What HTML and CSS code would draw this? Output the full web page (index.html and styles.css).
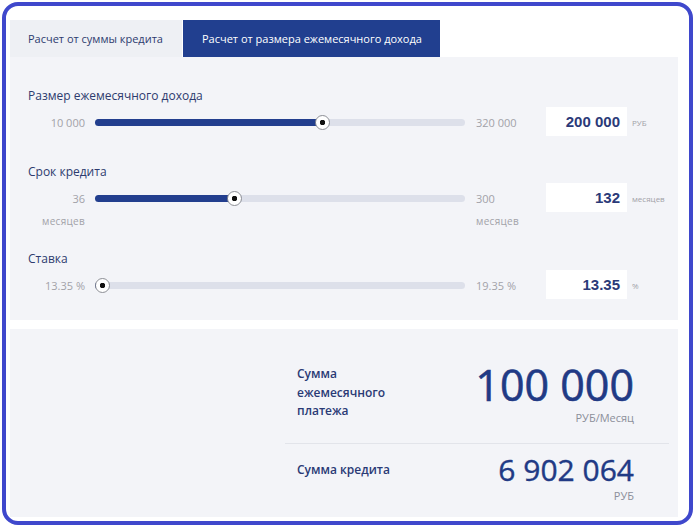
FILE: index.html
```html
<!DOCTYPE html>
<html lang="ru">
<head>
    <meta charset="UTF-8">
    <meta name="viewport" content="width=device-width, initial-scale=1.0">
    <title>Кредитный калькулятор</title>
    <link rel="stylesheet" href="styles.css">
</head>
<body>
    <div class="frame">
        <div class="tabs">
            <div class="tab">Расчет от суммы кредита</div>
            <div class="tab tab-active">Расчет от размера ежемесячного дохода</div>
        </div>

        <div class="params">
            <div class="param">
                <div class="param-title">Размер ежемесячного дохода</div>
                <div class="control">
                    <div class="min">10 000</div>
                    <div class="track">
                        <div class="fill" style="width: 61.6%"></div>
                        <div class="thumb" style="left: 61.6%"></div>
                    </div>
                    <div class="max">320 000</div>
                    <div class="value">200 000</div>
                    <div class="unit">РУБ</div>
                </div>
            </div>

            <div class="param param-tall">
                <div class="param-title">Срок кредита</div>
                <div class="control">
                    <div class="min">36<div class="sub">месяцев</div></div>
                    <div class="track">
                        <div class="fill" style="width: 37.6%"></div>
                        <div class="thumb" style="left: 37.6%"></div>
                    </div>
                    <div class="max">300<div class="sub">месяцев</div></div>
                    <div class="value">132</div>
                    <div class="unit">месяцев</div>
                </div>
            </div>

            <div class="param">
                <div class="param-title">Ставка</div>
                <div class="control">
                    <div class="min">13.35 %</div>
                    <div class="track">
                        <div class="fill" style="width: 1.9%"></div>
                        <div class="thumb" style="left: 1.9%"></div>
                    </div>
                    <div class="max">19.35 %</div>
                    <div class="value">13.35</div>
                    <div class="unit">%</div>
                </div>
            </div>
        </div>

        <div class="results">
            <div class="result-list">
                <div class="result">
                    <div class="result-name">Сумма<br>ежемесячного<br>платежа</div>
                    <div class="result-sum">
                        <div class="sum-big">100 000</div>
                        <div class="sum-unit">РУБ/Месяц</div>
                    </div>
                </div>
                <div class="result result-last">
                    <div class="result-name">Сумма кредита</div>
                    <div class="result-sum">
                        <div class="sum-mid">6 902 064</div>
                        <div class="sum-unit">РУБ</div>
                    </div>
                </div>
            </div>
        </div>
    </div>
</body>
</html>
```

FILE: styles.css
```css
body {
    margin: 0;
    font-family: 'Open Sans', 'Noto Sans', sans-serif;
    background-color: #fff;
}

.frame {
    margin: 2px;
    width: 668px;
    height: 497px;
    border: 4px solid #3f48cc;
    border-radius: 16px;
    padding: 14px 11px 4px 4px;
    display: flex;
    flex-direction: column;
}

/* вкладки */
.tabs {
    display: flex;
    gap: 1px;
    height: 37px;
}

.tab {
    width: 154px;
    padding-left: 18px;
    background-color: #eef0f4;
    color: #2d3b6e;
    font-size: 11px;
    line-height: 37px;
    white-space: nowrap;
}

.tab-active {
    width: 238px;
    padding-left: 19px;
    background-color: #213f8f;
    color: #fff;
}

/* параметры */
.params {
    background-color: #f3f4f8;
    height: 232px;
    padding: 31px 0 0 18px;
}

.param {
    margin-bottom: 28px;
}

.param-tall {
    margin-bottom: 39px;
}

.param-title {
    color: #2d3b6e;
    font-size: 12px;
    line-height: 16px;
    height: 16px;
    margin-bottom: 3px;
}

.control {
    display: flex;
    align-items: center;
    height: 29px;
}

.min,
.max {
    color: #a2a2a8;
    font-size: 11px;
    line-height: 16px;
    position: relative;
    top: 1px;
}

.min {
    width: 57px;
    text-align: right;
}

.max {
    width: 70px;
}

.sub {
    position: absolute;
    top: 22px;
    font-size: 10px;
    letter-spacing: 0.3px;
}

.min .sub {
    right: 0;
}

.max .sub {
    left: 0;
}

.track {
    position: relative;
    width: 370px;
    height: 7px;
    margin: 2px 11px 0 10px;
    border-radius: 4px;
    background-color: #dde0ea;
}

.fill {
    height: 100%;
    border-radius: 4px;
    background-color: #223e8e;
}

.thumb {
    position: absolute;
    top: 50%;
    width: 13px;
    height: 13px;
    margin: -7.5px 0 0 -7.5px;
    border: 1px solid #8d8f96;
    border-radius: 50%;
    background: radial-gradient(circle, #111 0 2.5px, #fff 3px);
}

.value {
    width: 81px;
    height: 29px;
    box-sizing: border-box;
    padding-right: 7px;
    background-color: #fff;
    text-align: right;
    font-family: 'Liberation Sans', Arial, sans-serif;
    font-weight: bold;
    font-size: 15px;
    line-height: 29px;
    color: #2b3a78;
}

.unit {
    margin-left: 5px;
    font-size: 8px;
    color: #a2a2a8;
    position: relative;
    top: 1px;
}

/* результаты */
.results {
    margin-top: 9px;
    flex: 1;
    background-color: #f3f4f8;
    padding: 0 9px 0 275px;
}

.result {
    display: flex;
    justify-content: space-between;
    padding: 0 35px 0 12px;
}

.result:first-child {
    padding-top: 30px;
    padding-bottom: 18px;
    border-bottom: 1px solid #e2e4ea;
}

.result-last {
    padding-top: 11px;
}

.result-name {
    color: #2a3a75;
    font-size: 12px;
    font-weight: 600;
    line-height: 18.5px;
    margin-top: 6px;
}

.result-sum {
    text-align: right;
    color: #213a85;
}

.sum-big {
    font-size: 43px;
    line-height: 52px;
    -webkit-text-stroke: 0.6px #213a85;
}

.sum-mid {
    font-size: 30px;
    line-height: 38px;
    margin-top: -4px;
    -webkit-text-stroke: 0.4px #213a85;
}

.sum-unit {
    font-size: 11px;
    line-height: 14px;
    color: #8c8f9a;
}
```
